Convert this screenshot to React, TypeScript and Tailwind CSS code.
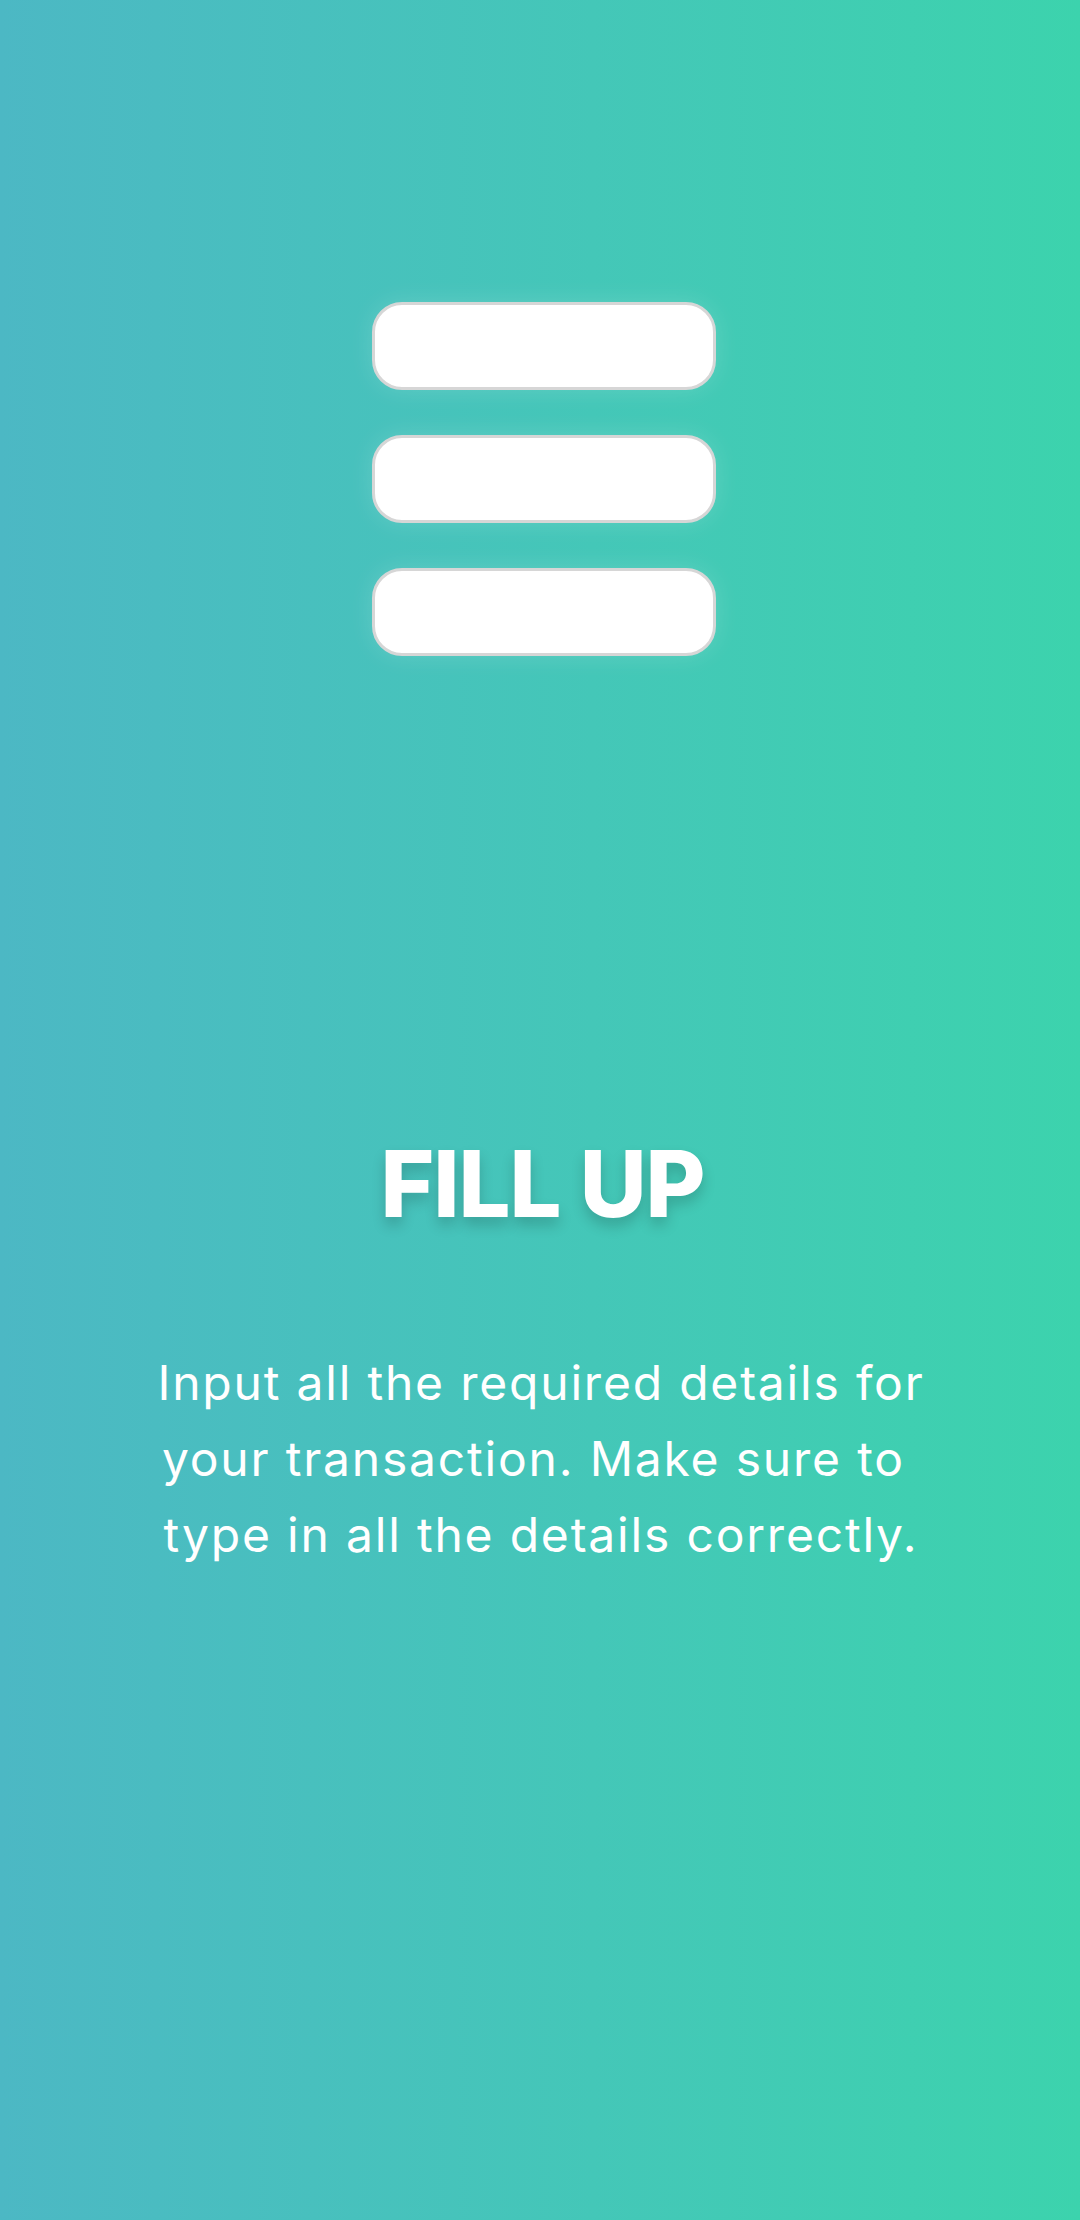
import React from "react";

export default function App() {
  return (
    <div
      className="min-h-screen h-[2220px] w-full bg-gradient-to-r from-[#4cb8c4] to-[#3cd3ad] flex flex-col items-center text-white"
      style={{ fontFamily: "Inter, 'Open Sans', sans-serif" }}
    >
      {/* form fields illustration */}
      <div className="mt-[302px] ml-[7px] flex flex-col gap-[45px]">
        <div className="w-[344px] h-[88px] rounded-[30px] bg-white border-[3px] border-[#d6d6d6] shadow-[0_0_24px_rgba(255,255,255,0.15)]" />
        <div className="w-[344px] h-[88px] rounded-[30px] bg-white border-[3px] border-[#d6d6d6] shadow-[0_0_24px_rgba(255,255,255,0.15)]" />
        <div className="w-[344px] h-[88px] rounded-[30px] bg-white border-[3px] border-[#d6d6d6] shadow-[0_0_24px_rgba(255,255,255,0.15)]" />
      </div>

      {/* title */}
      <h1 className="mt-[482px] ml-[5px] text-[92px] leading-none font-extrabold tracking-[-1px] [text-shadow:0_8px_14px_rgba(0,0,0,0.18)]">
        FILL UP
      </h1>

      {/* description */}
      <p className="mt-[115px] ml-[2px] text-[48px] leading-[76px] text-center font-normal tracking-[1.8px]">
        Input all the required details for
        <br />
        your transaction. Make sure to&nbsp;
        <br />
        type in all the details correctly.
      </p>
    </div>
  );
}
